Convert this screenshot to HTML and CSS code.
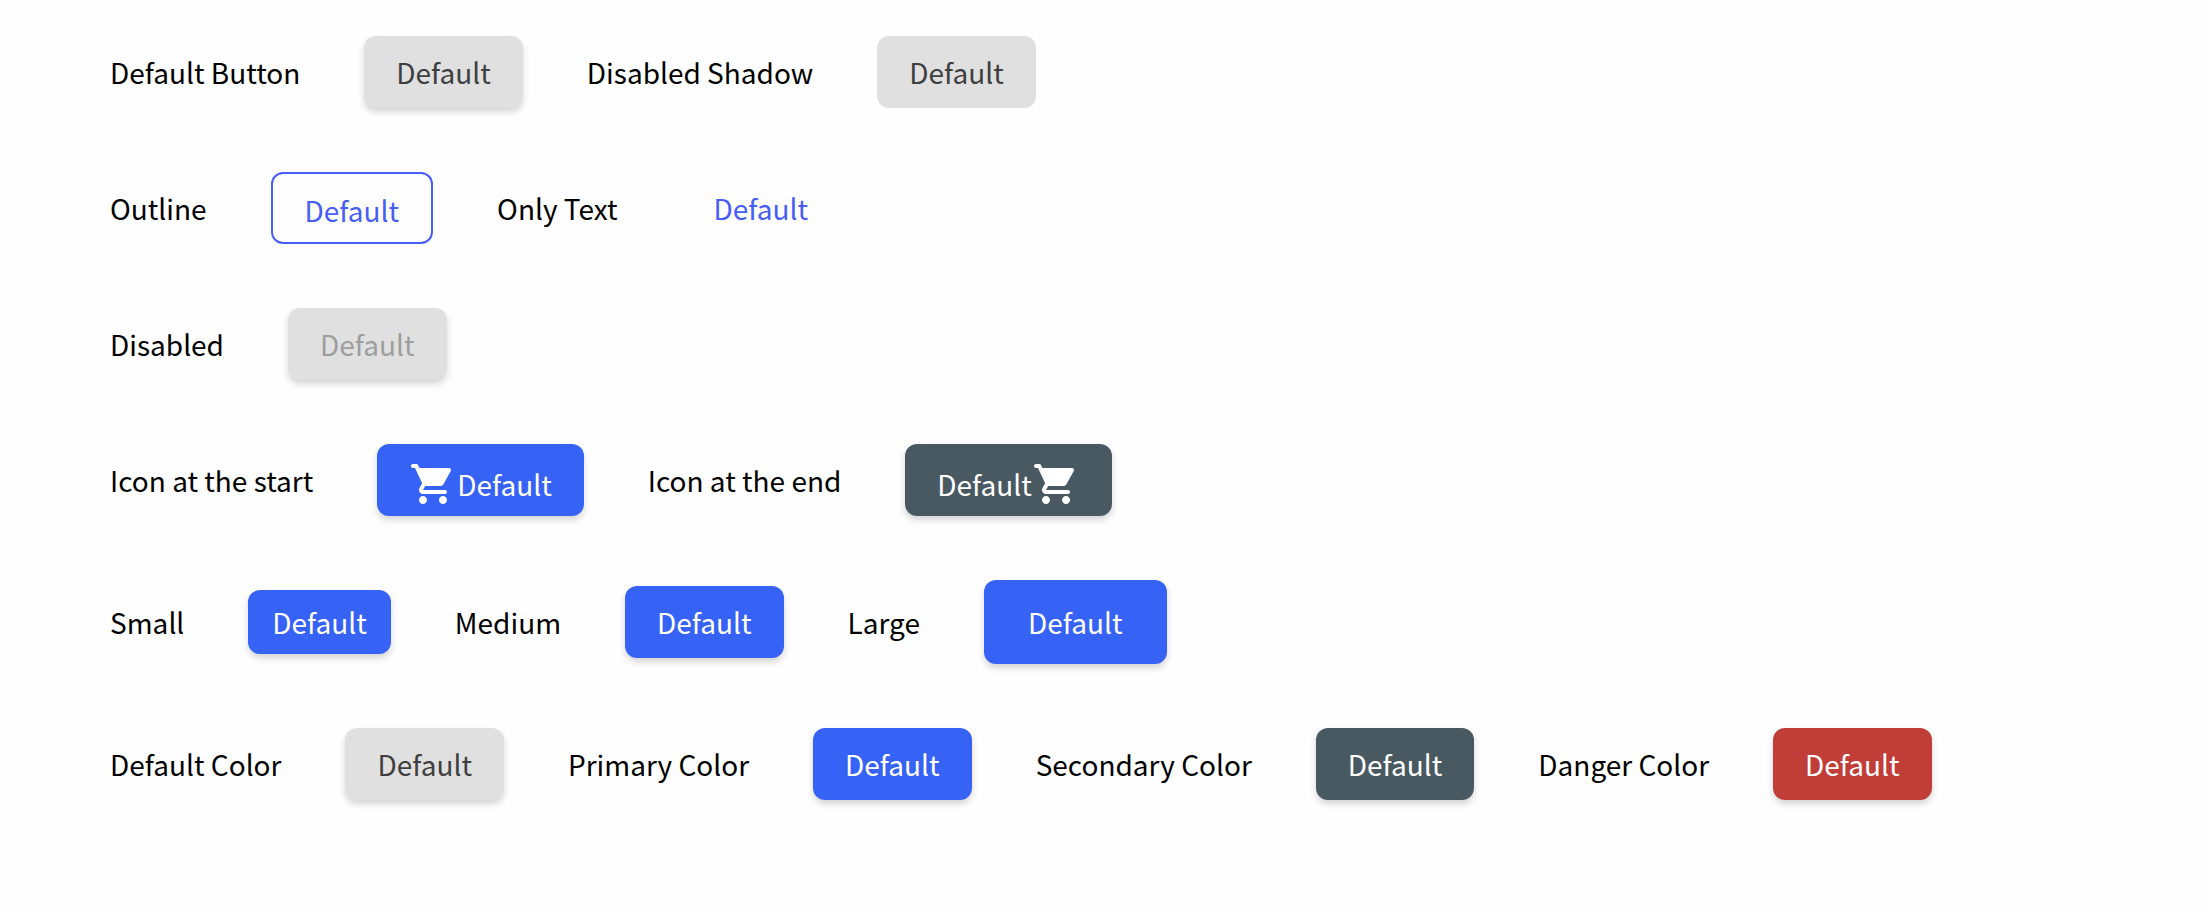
FILE: index.html
```html
<!DOCTYPE html>
<html lang="en">
<head>
<meta charset="utf-8">
<meta name="viewport" content="width=device-width, initial-scale=1">
<title>Buttons</title>
<link rel="stylesheet" href="styles.css">
</head>
<body>
<svg class="sprite" aria-hidden="true">
  <symbol id="cart" viewBox="0 0 24 24">
    <path d="M7 18c-1.1 0-1.99.9-1.99 2S5.9 22 7 22s2-.9 2-2-.9-2-2-2zM1 3c0 .55.45 1 1 1h1l3.6 7.59-1.35 2.44C4.52 15.37 5.48 17 7 17h11c.55 0 1-.45 1-1s-.45-1-1-1H7l1.1-2h7.45c.75 0 1.41-.41 1.75-1.03l3.58-6.49c.37-.66-.11-1.48-.87-1.48H5.21l-.67-1.43c-.16-.35-.52-.57-.9-.57H2c-.55 0-1 .45-1 1zm16 15c-1.1 0-1.99.9-1.99 2s.89 2 1.99 2 2-.9 2-2-.9-2-2-2z"/>
  </symbol>
</svg>
<main class="showcase">
  <div class="row">
    <span id="l-default">Default Button</span>
    <button type="button" class="btn" aria-describedby="l-default">Default</button>
    <span id="l-noshadow">Disabled Shadow</span>
    <button type="button" class="btn btn-flat" aria-describedby="l-noshadow">Default</button>
  </div>
  <div class="row">
    <span id="l-outline">Outline</span>
    <button type="button" class="btn btn-outline" aria-describedby="l-outline">Default</button>
    <span id="l-text">Only Text</span>
    <button type="button" class="btn btn-text" aria-describedby="l-text">Default</button>
  </div>
  <div class="row">
    <span id="l-disabled">Disabled</span>
    <button type="button" class="btn" disabled aria-describedby="l-disabled">Default</button>
  </div>
  <div class="row">
    <span id="l-start">Icon at the start</span>
    <button type="button" class="btn btn-primary btn-icon" aria-describedby="l-start"><svg class="icon" aria-hidden="true"><use href="#cart"/></svg>Default</button>
    <span id="l-end">Icon at the end</span>
    <button type="button" class="btn btn-secondary btn-icon" aria-describedby="l-end">Default<svg class="icon" aria-hidden="true"><use href="#cart"/></svg></button>
  </div>
  <div class="row">
    <span id="l-small">Small</span>
    <button type="button" class="btn btn-primary btn-small" aria-describedby="l-small">Default</button>
    <span id="l-medium">Medium</span>
    <button type="button" class="btn btn-primary" aria-describedby="l-medium">Default</button>
    <span id="l-large">Large</span>
    <button type="button" class="btn btn-primary btn-large" aria-describedby="l-large">Default</button>
  </div>
  <div class="row">
    <span id="l-cdefault">Default Color</span>
    <button type="button" class="btn" aria-describedby="l-cdefault">Default</button>
    <span id="l-cprimary">Primary Color</span>
    <button type="button" class="btn btn-primary" aria-describedby="l-cprimary">Default</button>
    <span id="l-csecondary">Secondary Color</span>
    <button type="button" class="btn btn-secondary" aria-describedby="l-csecondary">Default</button>
    <span id="l-cdanger">Danger Color</span>
    <button type="button" class="btn btn-danger" aria-describedby="l-cdanger">Default</button>
  </div>
</main>
</body>
</html>
```
FILE: styles.css
```css
* {
  box-sizing: border-box;
}

body {
  margin: 0;
  background: #fefefe;
  color: #000;
  font: 400 28px/40px "Noto Sans CJK JP", "Noto Sans", sans-serif;
}

.sprite {
  display: none;
}

.showcase {
  display: flex;
  flex-direction: column;
  gap: 64px;
  padding: 36px 110px;
}

.row {
  display: flex;
  flex-wrap: wrap;
  align-items: center;
  gap: 64px;
}

.btn {
  display: inline-flex;
  align-items: center;
  padding: 16px 32px;
  border: 0;
  border-radius: 12px;
  background: #e0e0e0;
  color: #3f3f3f;
  font: inherit;
  box-shadow: 0 4px 6px rgba(51, 51, 51, 0.2);
  cursor: pointer;
}

.btn:disabled {
  color: #9e9e9e;
  cursor: default;
}

.btn-flat,
.btn-outline,
.btn-text {
  box-shadow: none;
}

.btn-outline,
.btn-text {
  background: none;
  color: #465df6;
}

.btn-outline {
  padding-bottom: 12px;
  border: 2px solid #465df6;
}

.btn-primary {
  background: #3762f6;
  color: #fff;
}

.btn-secondary {
  background: #495962;
  color: #fff;
}

.btn-danger {
  background: #c13d37;
  color: #fff;
}

.btn-icon {
  padding-bottom: 8px;
}

.icon {
  width: 48px;
  height: 48px;
  fill: currentColor;
}

.btn-small {
  padding: 12px 24px;
}

.btn-large {
  padding: 22px 44px;
}
```
